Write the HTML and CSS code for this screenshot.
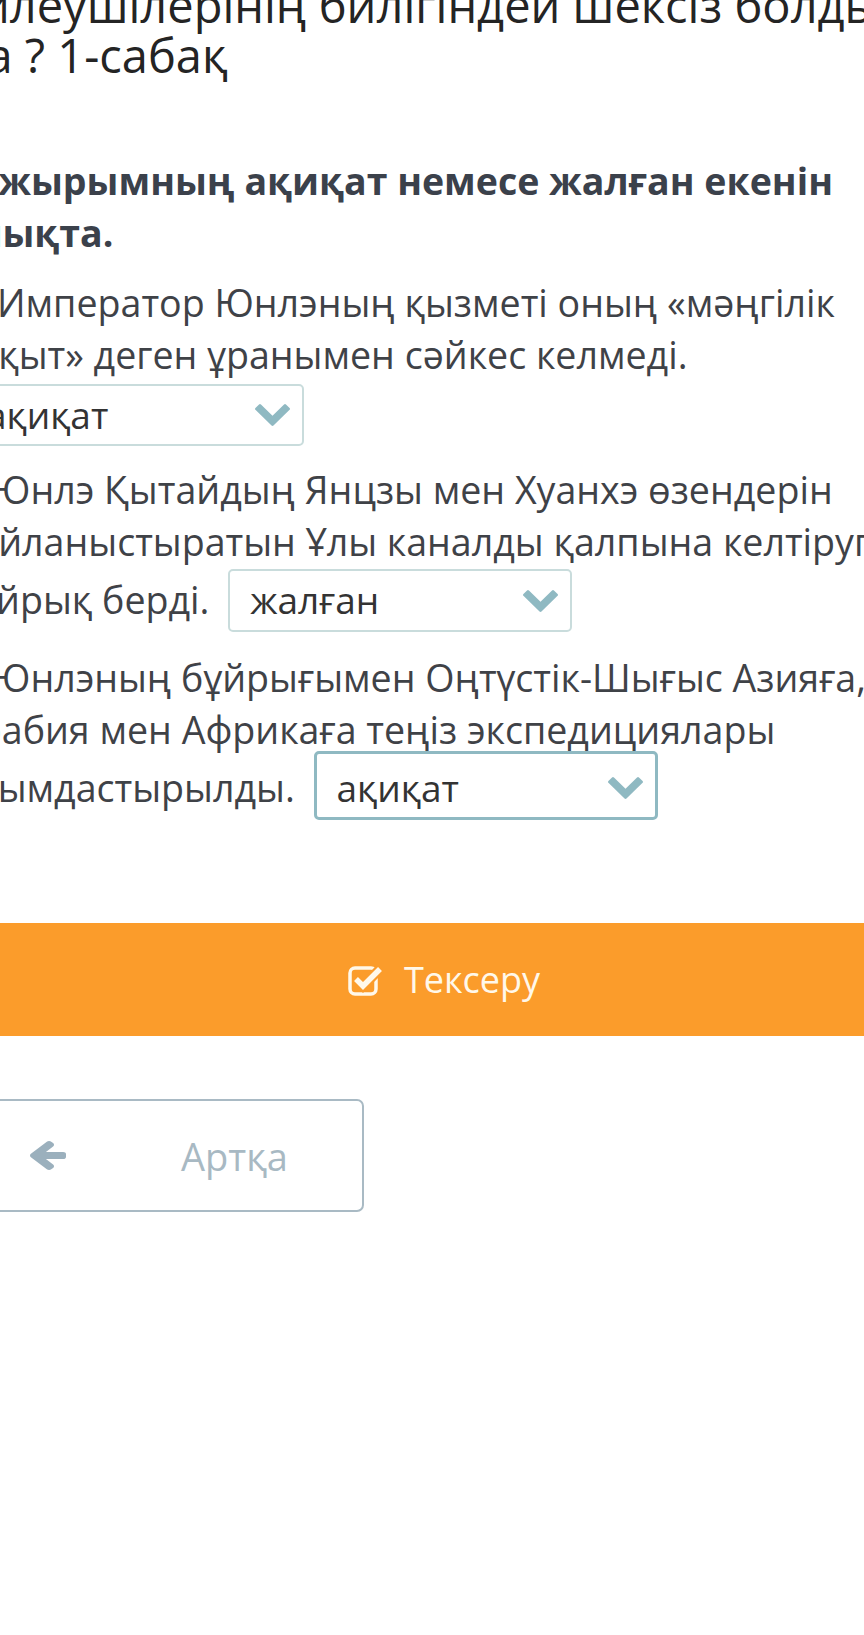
FILE: index.html
```html
<html>

<head>
    <meta name="viewport" content="width=device-width, initial-scale=1.0">
    <link rel="stylesheet" href="styles.css">
</head>

<body>
    <div class="page">
        <h1 class="title">билеушілерінің билігіндей шексіз болды ма ? 1-сабақ</h1>

        <p class="task-head">Тұжырымның ақиқат немесе жалған екенін анықта.</p>

        <p class="item item-first">Император Юнлэның қызметі оның «мәңгілік бақыт» деген ұранымен сәйкес келмеді.</p>
        <div class="select select-block">
            <span>ақиқат</span>
            <svg class="chevron" viewBox="90 533 1612 1035" preserveAspectRatio="none"><path d="M1683 808l-742 741q-19 19-45 19t-45-19l-742-741q-19-19-19-45.5t19-45.5l166-165q19-19 45-19t45 19l531 531 531-531q19-19 45-19t45 19l166 165q19 19 19 45.5t-19 45.5z"/></svg>
        </div>

        <p class="item">Юнлэ Қытайдың Янцзы мен Хуанхэ өзендерін байланыстыратын Ұлы каналды қалпына келтіруге бұйрық берді.
            <span class="select">
                <span>жалған</span>
                <svg class="chevron" viewBox="90 533 1612 1035" preserveAspectRatio="none"><path d="M1683 808l-742 741q-19 19-45 19t-45-19l-742-741q-19-19-19-45.5t19-45.5l166-165q19-19 45-19t45 19l531 531 531-531q19-19 45-19t45 19l166 165q19 19 19 45.5t-19 45.5z"/></svg>
            </span>
        </p>

        <p class="item">Юнлэның бұйрығымен Оңтүстік-Шығыс Азияға, Арабия мен Африкаға теңіз экспедициялары ұйымдастырылды.
            <span class="select active">
                <span>ақиқат</span>
                <svg class="chevron" viewBox="90 533 1612 1035" preserveAspectRatio="none"><path d="M1683 808l-742 741q-19 19-45 19t-45-19l-742-741q-19-19-19-45.5t19-45.5l166-165q19-19 45-19t45 19l531 531 531-531q19-19 45-19t45 19l166 165q19 19 19 45.5t-19 45.5z"/></svg>
            </span>
        </p>

        <button class="check-bar">
            <svg class="check-icon" viewBox="0 0 36 32">
                <rect x="2" y="4" width="26" height="26" rx="5" fill="none" stroke="currentColor" stroke-width="3.5"/>
                <path d="M8 15 L15 22 L32 5" fill="none" stroke="#fb9c2b" stroke-width="10"/>
                <path d="M8 15 L15 22 L32 5" fill="none" stroke="currentColor" stroke-width="5.5"/>
            </svg>
            Тексеру
        </button>

        <button class="back">
            <svg class="arrow" viewBox="64 117 1472 1558" preserveAspectRatio="none"><path d="M1536 832v128q0 53-32.5 90.5t-84.5 37.5h-704l293 294q38 36 38 90t-38 90l-75 76q-37 37-90 37-52 0-91-37l-651-652q-37-37-37-90 0-52 37-91l651-650q38-38 91-38 52 0 90 38l75 74q38 38 38 91t-38 91l-293 293h704q52 0 84.5 37.5t32.5 90.5z"/></svg>
            <span>Артқа</span>
        </button>
    </div>
</body>

</html>
```

FILE: styles.css
```css
body {
    margin: 0;
    font-family: "Open Sans", sans-serif;
    background: #ffffff;
    overflow-x: hidden;
}

.page {
    margin-left: -45px;
    width: 965px;
}

.title {
    margin: -20px 0 0 -3px;
    font-size: 47px;
    font-weight: 400;
    line-height: 50px;
    color: #242424;
}

.task-head {
    margin: 75px 0 0;
    font-size: 37.5px;
    font-weight: 700;
    line-height: 52px;
    color: #3b414b;
}

.item {
    margin: 18px 0 0;
    font-size: 37.6px;
    line-height: 52px;
    color: #3f4247;
    text-indent: 36px;
}

.item + .item {
    margin-top: 20px;
}

.item-first {
    text-indent: 42px;
}

.select {
    display: inline-flex;
    align-items: center;
    justify-content: space-between;
    box-sizing: border-box;
    width: 344px;
    height: 63px;
    margin: 1px 0 0 9px;
    padding: 0 12px 2px 20px;
    border: 2px solid #c9dcdc;
    border-radius: 5px;
    vertical-align: baseline;
    text-indent: 0;
    line-height: 1;
    font-size: 37px;
    color: #333333;
}

.select .chevron {
    margin-top: 2px;
}

.select-block {
    display: flex;
    width: 340px;
    height: 62px;
    margin: 3px 0 0 9px;
}

.select.active {
    height: 69px;
    margin-top: -5px;
    padding-top: 5px;
    border: 3px solid #8fb9c2;
}

.chevron {
    width: 35px;
    height: 22px;
    fill: #8fb9c2;
}

.check-bar {
    display: flex;
    justify-content: center;
    align-items: center;
    gap: 20px;
    width: 100%;
    height: 113px;
    margin-top: 103px;
    padding: 0 0 0 13px;
    border: none;
    background: #fb9c2b;
    color: #fff8ea;
    font-family: "Open Sans", sans-serif;
    font-size: 36px;
}

.check-icon {
    width: 36px;
    height: 32px;
}

.back {
    display: flex;
    align-items: center;
    box-sizing: border-box;
    width: 409px;
    height: 113px;
    margin-top: 63px;
    padding: 0 0 0 73px;
    border: 2px solid #a9bac4;
    border-radius: 7px;
    background: #ffffff;
    color: #a8b9c3;
    font-family: "Open Sans", sans-serif;
    font-size: 38px;
}

.arrow {
    width: 36px;
    height: 29px;
    margin-right: 115px;
    fill: #9bb0bd;
}
```
